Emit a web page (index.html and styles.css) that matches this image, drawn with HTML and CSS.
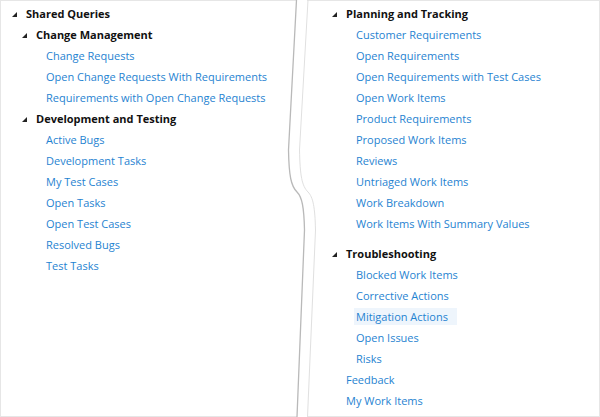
FILE: index.html
```html
<!DOCTYPE html>
<html lang="en">
<head>
<meta charset="utf-8">
<title>Shared Queries</title>
<link rel="stylesheet" href="styles.css">
</head>
<body>
<div class="frame">
  <section class="panel panel-left">
    <div class="row hdr l0"><span class="tri"><svg width="5" height="5" viewBox="0 0 5 5"><polygon points="5,0 5,5 0,5"/></svg></span>Shared Queries</div>
    <div class="row hdr l1"><span class="tri"><svg width="5" height="5" viewBox="0 0 5 5"><polygon points="5,0 5,5 0,5"/></svg></span>Change Management</div>
    <div class="row item l2"><a class="link">Change Requests</a></div>
    <div class="row item l2"><a class="link">Open Change Requests With Requirements</a></div>
    <div class="row item l2"><a class="link">Requirements with Open Change Requests</a></div>
    <div class="row hdr l1"><span class="tri"><svg width="5" height="5" viewBox="0 0 5 5"><polygon points="5,0 5,5 0,5"/></svg></span>Development and Testing</div>
    <div class="row item l2"><a class="link">Active Bugs</a></div>
    <div class="row item l2"><a class="link">Development Tasks</a></div>
    <div class="row item l2"><a class="link">My Test Cases</a></div>
    <div class="row item l2"><a class="link">Open Tasks</a></div>
    <div class="row item l2"><a class="link">Open Test Cases</a></div>
    <div class="row item l2"><a class="link">Resolved Bugs</a></div>
    <div class="row item l2"><a class="link">Test Tasks</a></div>
  </section>
  <section class="panel panel-right">
    <div class="row hdr r1"><span class="tri"><svg width="5" height="5" viewBox="0 0 5 5"><polygon points="5,0 5,5 0,5"/></svg></span>Planning and Tracking</div>
    <div class="row item r2"><a class="link">Customer Requirements</a></div>
    <div class="row item r2"><a class="link">Open Requirements</a></div>
    <div class="row item r2"><a class="link">Open Requirements with Test Cases</a></div>
    <div class="row item r2"><a class="link">Open Work Items</a></div>
    <div class="row item r2"><a class="link">Product Requirements</a></div>
    <div class="row item r2"><a class="link">Proposed Work Items</a></div>
    <div class="row item r2"><a class="link">Reviews</a></div>
    <div class="row item r2"><a class="link">Untriaged Work Items</a></div>
    <div class="row item r2"><a class="link">Work Breakdown</a></div>
    <div class="row item r2"><a class="link">Work Items With Summary Values</a></div>
    <div class="row hdr r1 spaced"><span class="tri"><svg width="5" height="5" viewBox="0 0 5 5"><polygon points="5,0 5,5 0,5"/></svg></span>Troubleshooting</div>
    <div class="row item r2"><a class="link">Blocked Work Items</a></div>
    <div class="row item r2"><a class="link">Corrective Actions</a></div>
    <div class="row item r2"><a class="link hover">Mitigation Actions</a></div>
    <div class="row item r2"><a class="link">Open Issues</a></div>
    <div class="row item r2"><a class="link">Risks</a></div>
    <div class="row item r1leaf"><a class="link">Feedback</a></div>
    <div class="row item r1leaf"><a class="link">My Work Items</a></div>
  </section>
  <svg class="tear" width="40" height="417" viewBox="280 0 40 417">
    <path class="edge-a" d="M296.5,0 L288.5,150 C289,176 291,186 297,192 C302,197 304,207 304.5,230 L297,417"/>
    <path class="edge-b" d="M308,0 L299.5,150 C300,176 302,186 308,192 C313,197 315,207 315.5,230 L307.5,417"/>
  </svg>
</div>
</body>
</html>
```

FILE: styles.css
```css
* { box-sizing: border-box; }
html, body { margin: 0; padding: 0; background: #fff; }
body {
  font-family: "Open Sans", "Noto Sans", "Liberation Sans", sans-serif;
  font-size: 11px;
  color: #000;
}
.frame {
  position: relative;
  width: 600px;
  height: 417px;
  display: flex;
  gap: 10px;
  overflow: hidden;
}
.panel {
  height: 417px;
  padding-top: 2px;
  border-top: 1px solid #e6e6e6;
  border-bottom: 1px solid #e6e6e6;
}
.panel-left {
  width: 297px;
  border-left: 1px solid #e6e6e6;
}
.panel-right {
  flex: 1;
  border-right: 1px solid #e6e6e6;
}
.row {
  height: 21px;
  line-height: 21px;
  white-space: nowrap;
  display: flex;
  align-items: center;
}
.hdr { font-weight: 700; color: #111; }
.tri {
  width: 14px;
  flex: none;
  display: flex;
  align-items: center;
  padding-top: 1px;
}
.tri svg { fill: #222; display: block; }
.l0 { padding-left: 11px; }
.l1 { padding-left: 21px; }
.l1 .tri { width: 14px; }
.l2 { padding-left: 45px; }
.r1 { padding-left: 25px; }
.r2 { padding-left: 49px; }
.r1leaf { padding-left: 39px; }
.spaced { margin-top: 9px; }
.link {
  color: #1f83d1;
  text-decoration: none;
  cursor: pointer;
}
.link.hover {
  background: #eef5fc;
  line-height: 17px;
  padding: 0 9px 0 2px;
  margin-left: -2px;
}
.tear {
  position: absolute;
  left: 280px;
  top: 0;
  pointer-events: none;
}
.tear path { fill: none; }
.edge-a { stroke: #b9b9b9; stroke-width: 1.3; }
.edge-b { stroke: #e0e0e0; stroke-width: 1; }
```
